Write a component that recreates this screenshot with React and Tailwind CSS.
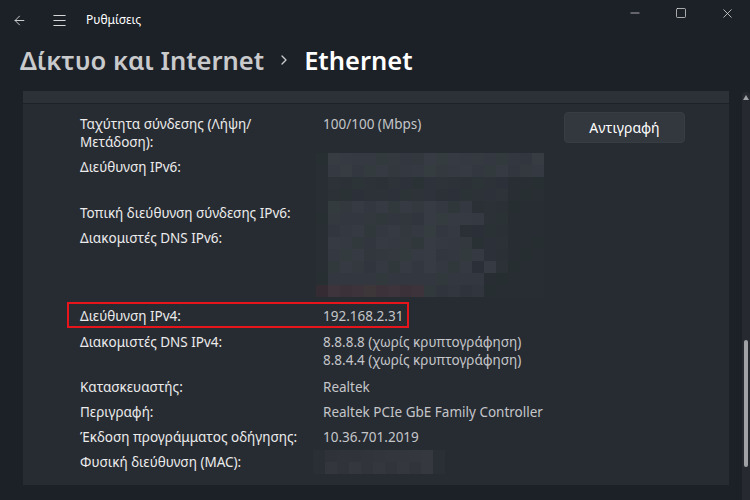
import { ArrowLeft, Menu, Minus, Square, X, ChevronRight } from "lucide-react";

const rows = [
  { label: ["Ταχύτητα σύνδεσης (Λήψη/", "Μετάδοση):"], value: ["100/100 (Mbps)"], button: true },
  { label: ["Διεύθυνση IPv6:"], value: ["", ""], extra: "mb-[3px]" },
  { label: ["Τοπική διεύθυνση σύνδεσης IPv6:"], value: [""] },
  { label: ["Διακομιστές DNS IPv6:"], value: ["", "", "", ""] },
  { label: ["Διεύθυνση IPv4:"], value: ["192.168.2.31"], boxed: true, extra: "mt-[-1px]" },
  { label: ["Διακομιστές DNS IPv4:"], value: ["8.8.8.8 (χωρίς κρυπτογράφηση)", "8.8.4.4 (χωρίς κρυπτογράφηση)"], extra: "mt-[1px] mb-[2px]" },
  { label: ["Κατασκευαστής:"], value: ["Realtek"] },
  { label: ["Περιγραφή:"], value: ["Realtek PCIe GbE Family Controller"] },
  { label: ["Έκδοση προγράμματος οδήγησης:"], value: ["10.36.701.2019"] },
  { label: ["Φυσική διεύθυνση (MAC):"], value: [""] },
];

// pixelated blur over the hidden addresses
const base = [39, 43, 50];
const light = [58, 62, 70];
const noise = (r, c) => ((r * 73 + c * 151 + r * c * 7) % 17) / 17;

function level(r, c) {
  const n = noise(r, c);
  if (c === 0) return 0.12;
  if (r <= 1) return 0.6 + n * 0.25;
  if (r <= 3) return c > 15 ? 0.08 : 0.25 + n * 0.15;
  if (r <= 9) {
    const edge = 12 + Math.round(n * 3);
    if (c < edge) return 0.55 + n * 0.3;
    if (c < 16) return 0.2 + n * 0.1;
    return 0.04;
  }
  if (c < 14) return 0.4 + n * 0.25;
  return 0.05;
}

function cellColor(r, c) {
  const l = level(r, c);
  let rgb = base.map((b, i) => Math.round(b + (light[i] - b) * l));
  if (r === 11 && c < 9) rgb = [rgb[0] + 12, rgb[1] - 2, rgb[2] - 2];
  if ((r + c) % 5 === 0) rgb = [rgb[0] - 1, rgb[1] + 2, rgb[2] - 2];
  return `rgb(${rgb.join(",")})`;
}

function Mosaic({ cols, rowsCount, tone }) {
  return (
    <div className="grid" style={{ gridTemplateColumns: `repeat(${cols}, 12px)` }}>
      {Array.from({ length: rowsCount * cols }).map((_, i) => {
        const r = Math.floor(i / cols);
        const c = i % cols;
        return (
          <div
            key={i}
            className="h-[12px] w-[12px]"
            style={{ backgroundColor: tone ? tone(r, c) : cellColor(r, c) }}
          />
        );
      })}
    </div>
  );
}

const macTone = (r, c) => {
  if (c === 0 || c === 10) return "rgb(42,46,53)";
  const n = noise(r + 3, c);
  const v = Math.round(47 + n * 6);
  return `rgb(${v},${v + 4},${v + 10})`;
};

export default function App() {
  return (
    <div className="w-[750px] h-[500px] overflow-hidden bg-[#1c2027] text-white flex flex-col font-['Noto_Sans','Open_Sans',sans-serif]">
      {/* title bar */}
      <div className="h-[40px] flex items-center">
        <ArrowLeft className="ml-[12px] w-[15px] h-[15px] text-[#d6d6d6]" strokeWidth={1.5} />
        <Menu className="ml-[24px] w-[17px] h-[17px] text-[#d6d6d6]" strokeWidth={1.5} />
        <span className="ml-[18px] text-[12px] text-white">Ρυθμίσεις</span>
        <div className="ml-auto flex items-center self-start h-[26px]">
          <div className="w-[46px] flex justify-center">
            <Minus className="w-[14px] h-[14px] text-[#e6e6e6]" strokeWidth={1.2} />
          </div>
          <div className="w-[46px] flex justify-center">
            <Square className="w-[12px] h-[12px] text-[#e6e6e6]" strokeWidth={1.4} />
          </div>
          <div className="w-[46px] flex justify-center">
            <X className="w-[15px] h-[15px] text-[#e6e6e6]" strokeWidth={1.2} />
          </div>
        </div>
      </div>

      {/* page heading */}
      <div className="h-[51px] pl-[20px] flex items-start">
        <h1 className="leading-[40px] text-[25.5px] font-semibold flex items-center">
          <span className="text-[#c9cacc]">Δίκτυο και Internet</span>
          <ChevronRight className="mx-[12px] w-[16px] h-[16px] text-[#c9cacc]" strokeWidth={2} />
          <span className="text-white">Ethernet</span>
        </h1>
      </div>

      {/* content */}
      <div className="flex flex-1">
        <div className="ml-[23px] w-[706px] h-[394px] flex flex-col bg-[#272b32]">
          <div className="h-[13px] bg-[#2c3037] border-b border-[#1e2228]" />
          <div className="relative pt-[11px] flex flex-col gap-[7px] text-[13.5px] leading-[18px]">
            {rows.map((row, i) => (
              <div key={i} className={`flex pl-[57px] ${row.extra || ""}`}>
                <div className="relative w-[243px] text-[#ececec]">
                  {row.boxed && (
                    <div className="absolute left-[-13px] top-[-5px] w-[342px] h-[26px] border-2 border-[#e8141b]" />
                  )}
                  {row.label.map((l, j) => (
                    <div key={j}>{l}</div>
                  ))}
                </div>
                <div className="flex-1 text-[#c4c6c9]">
                  {row.value.map((v, j) => (
                    <div key={j} className="h-[18px]">{v}</div>
                  ))}
                </div>
                {row.button && (
                  <button className="mr-[44px] -mt-[3px] w-[121px] h-[31px] rounded-[4px] bg-[#33373e] border border-[#383c43] text-[14px] text-white">
                    Αντιγραφή
                  </button>
                )}
              </div>
            ))}

            {/* blurred IPv6 values */}
            <div className="absolute left-[293px] top-[49px]">
              <Mosaic cols={19} rowsCount={12} />
            </div>
            {/* blurred MAC */}
            <div className="absolute left-[290px] top-[346px]">
              <Mosaic cols={11} rowsCount={2} tone={macTone} />
            </div>
          </div>
        </div>

        {/* scrollbar */}
        <div className="ml-[13px] mt-[1px] w-[8px] flex flex-col items-center rounded-t-[4px] bg-[#262a30]">
          <div className="mt-[3px] w-0 h-0 border-l-[3px] border-r-[3px] border-b-[5px] border-l-transparent border-r-transparent border-b-[#a0a2a6]" />
          <div className="mt-[240px] w-[4px] h-[127px] rounded-full bg-[#9fa1a5]" />
        </div>
      </div>
    </div>
  );
}
